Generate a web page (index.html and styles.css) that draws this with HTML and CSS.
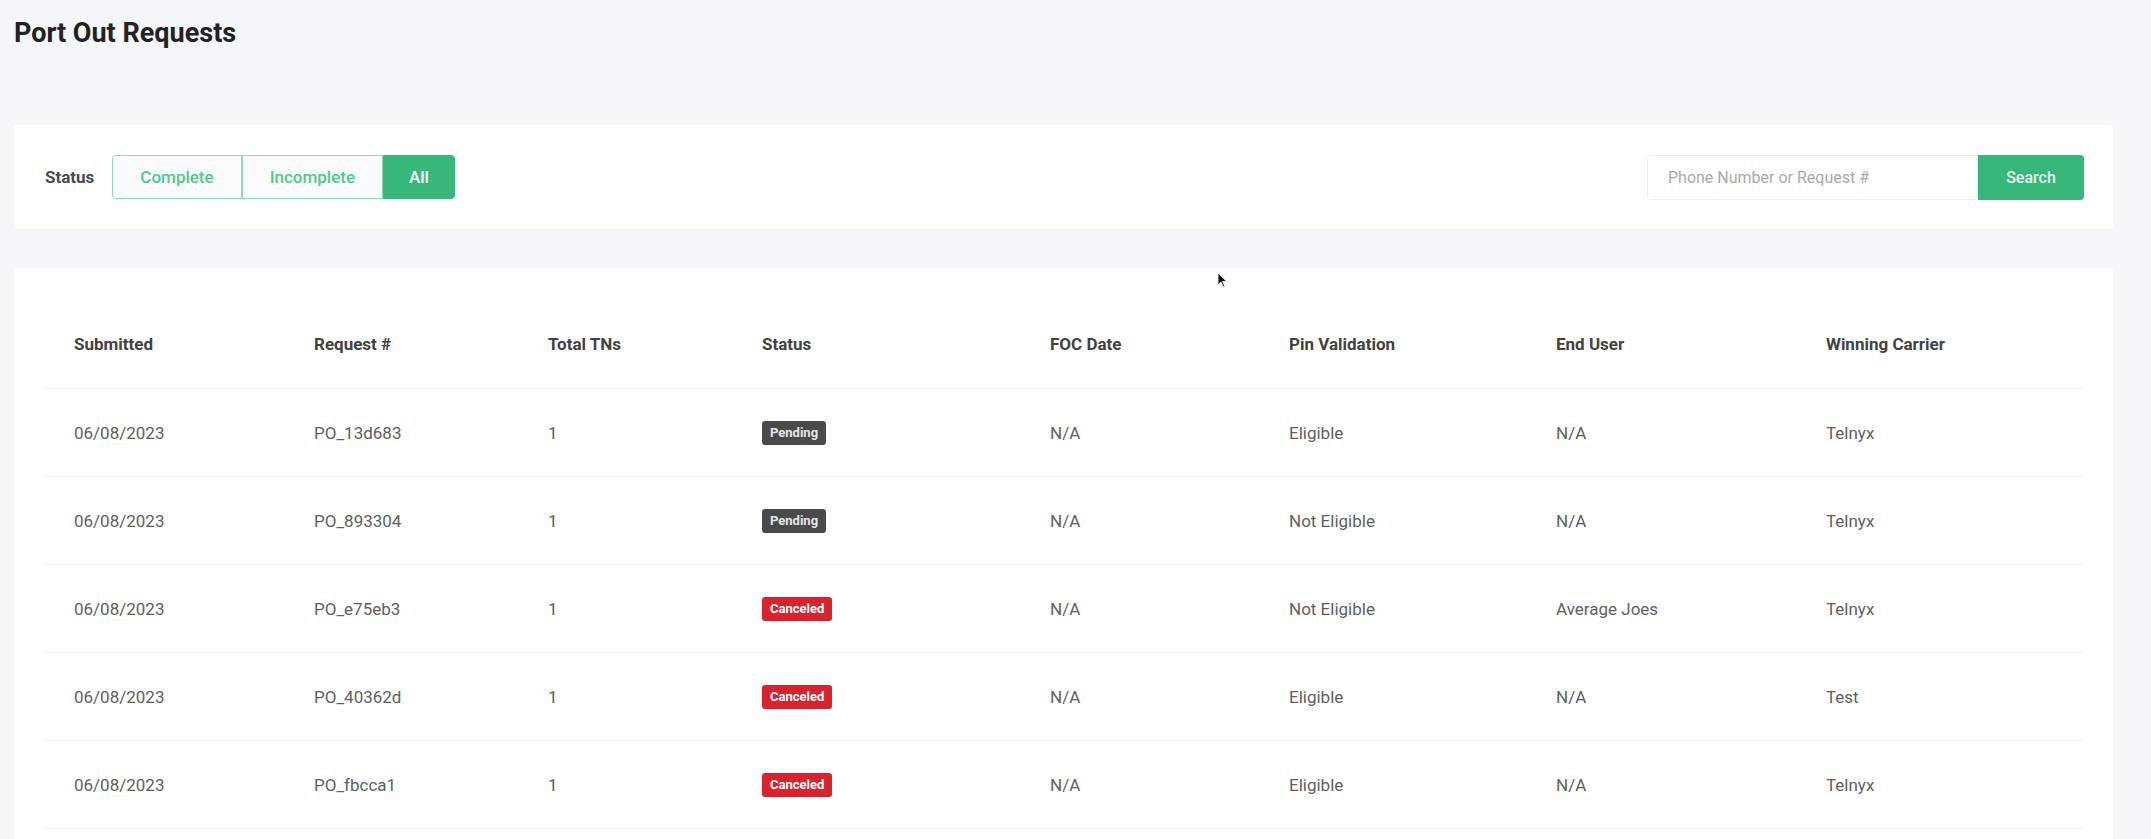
FILE: index.html
```html
<!DOCTYPE html>
<html lang="en">
<head>
    <meta charset="UTF-8">
    <meta name="viewport" content="width=device-width, initial-scale=1.0">
    <title>Port Out Requests</title>
    <link rel="stylesheet" href="styles.css">
</head>
<body>
    <h1 class="page-title">Port Out Requests</h1>

    <section class="card filters">
        <div class="status-filter">
            <span class="filter-label">Status</span>
            <div class="btn-group">
                <button class="btn-toggle">Complete</button>
                <button class="btn-toggle">Incomplete</button>
                <button class="btn-toggle active">All</button>
            </div>
        </div>
        <form class="search">
            <input type="text" placeholder="Phone Number or Request #">
            <button type="submit" class="btn-search">Search</button>
        </form>
    </section>

    <section class="card table-card">
        <table class="requests">
            <colgroup>
                <col style="width: 240px">
                <col style="width: 234px">
                <col style="width: 214px">
                <col style="width: 288px">
                <col style="width: 239px">
                <col style="width: 267px">
                <col style="width: 270px">
                <col style="width: 285px">
            </colgroup>
            <thead>
                <tr>
                    <th>Submitted</th>
                    <th>Request #</th>
                    <th>Total TNs</th>
                    <th>Status</th>
                    <th>FOC Date</th>
                    <th>Pin Validation</th>
                    <th>End User</th>
                    <th>Winning Carrier</th>
                </tr>
            </thead>
            <tbody>
                <tr>
                    <td>06/08/2023</td>
                    <td>PO_13d683</td>
                    <td>1</td>
                    <td><span class="badge pending">Pending</span></td>
                    <td>N/A</td>
                    <td>Eligible</td>
                    <td>N/A</td>
                    <td>Telnyx</td>
                </tr>
                <tr>
                    <td>06/08/2023</td>
                    <td>PO_893304</td>
                    <td>1</td>
                    <td><span class="badge pending">Pending</span></td>
                    <td>N/A</td>
                    <td>Not Eligible</td>
                    <td>N/A</td>
                    <td>Telnyx</td>
                </tr>
                <tr>
                    <td>06/08/2023</td>
                    <td>PO_e75eb3</td>
                    <td>1</td>
                    <td><span class="badge canceled">Canceled</span></td>
                    <td>N/A</td>
                    <td>Not Eligible</td>
                    <td>Average Joes</td>
                    <td>Telnyx</td>
                </tr>
                <tr>
                    <td>06/08/2023</td>
                    <td>PO_40362d</td>
                    <td>1</td>
                    <td><span class="badge canceled">Canceled</span></td>
                    <td>N/A</td>
                    <td>Eligible</td>
                    <td>N/A</td>
                    <td>Test</td>
                </tr>
                <tr>
                    <td>06/08/2023</td>
                    <td>PO_fbcca1</td>
                    <td>1</td>
                    <td><span class="badge canceled">Canceled</span></td>
                    <td>N/A</td>
                    <td>Eligible</td>
                    <td>N/A</td>
                    <td>Telnyx</td>
                </tr>
            </tbody>
        </table>
    </section>

    <!-- mouse pointer -->
    <svg class="pointer" width="11" height="16" viewBox="0 0 11 16">
        <path d="M1 1 L1 13 L4 10 L6.5 15 L8 14.3 L5.6 9.4 L9.6 9.4 Z" fill="#111" stroke="#fff" stroke-width="0.8" stroke-linejoin="round"/>
    </svg>
</body>
</html>
```

FILE: styles.css
```css
body {
    font-family: Roboto, "Liberation Sans", sans-serif;
    background: #f5f6fa;
    color: #5a5a5a;
    margin: 0;
    padding: 18px 38px 0 14px;
    position: relative;
    overflow: hidden;
}

.page-title {
    font-size: 27px;
    line-height: 30px;
    font-weight: 700;
    color: #222;
    margin: 0 0 77px;
}

.card {
    background: #fff;
    border-radius: 4px;
}

/* filter bar */

.filters {
    height: 104px;
    padding: 0 29px 0 31px;
    display: flex;
    align-items: center;
    justify-content: space-between;
}

.status-filter {
    display: flex;
    align-items: center;
    gap: 18px;
}

.filter-label {
    font-size: 17px;
    font-weight: 700;
    color: #4a4a4a;
}

.btn-group {
    display: flex;
}

.btn-toggle {
    font-family: inherit;
    height: 44px;
    padding: 0 27px;
    font-size: 17px;
    font-weight: 500;
    color: #4ccb8c;
    background: #fbfbfd;
    border: 1px solid #8fdcb4;
    cursor: pointer;
}

.btn-toggle:first-child {
    border-radius: 4px 0 0 4px;
}

.btn-toggle:last-child {
    border-radius: 0 4px 4px 0;
}

.btn-toggle.active {
    background: #37b77a;
    border-color: #37b77a;
    color: #fff;
    padding: 0 25px;
}

.search {
    display: flex;
}

.search input {
    font-family: inherit;
    width: 331px;
    height: 45px;
    box-sizing: border-box;
    padding: 0 20px;
    font-size: 16px;
    color: #333;
    border: 1px solid #eeeff2;
    border-right: none;
    border-radius: 4px 0 0 4px;
    outline: none;
}

.search input::placeholder {
    color: #a9a9ad;
}

.btn-search {
    font-family: inherit;
    width: 106px;
    height: 45px;
    background: #37b77a;
    color: #e8f7ef;
    border: none;
    border-radius: 0 4px 4px 0;
    font-size: 16px;
    font-weight: 500;
    cursor: pointer;
}

/* requests table */

.table-card {
    margin-top: 39px;
    padding: 31px;
}

.requests {
    width: 100%;
    border-collapse: collapse;
    table-layout: fixed;
    font-size: 17px;
}

.requests th {
    height: 89px;
    padding: 0 0 0 29px;
    text-align: left;
    font-weight: 700;
    color: #424242;
    border-bottom: 1px solid #f1f2f5;
}

.requests td {
    height: 87px;
    padding: 0 0 0 29px;
    color: #606060;
    border-bottom: 1px solid #f1f2f5;
}

.badge {
    display: inline-block;
    height: 24px;
    line-height: 24px;
    padding: 0 8px;
    border-radius: 3px;
    font-size: 13px;
    font-weight: 700;
    color: #fff;
    vertical-align: middle;
}

.badge.pending {
    background: #4a4a4a;
    color: #e6e6e6;
}

.badge.canceled {
    background: #d8232f;
}

.pointer {
    position: absolute;
    left: 1217px;
    top: 272px;
}
```
